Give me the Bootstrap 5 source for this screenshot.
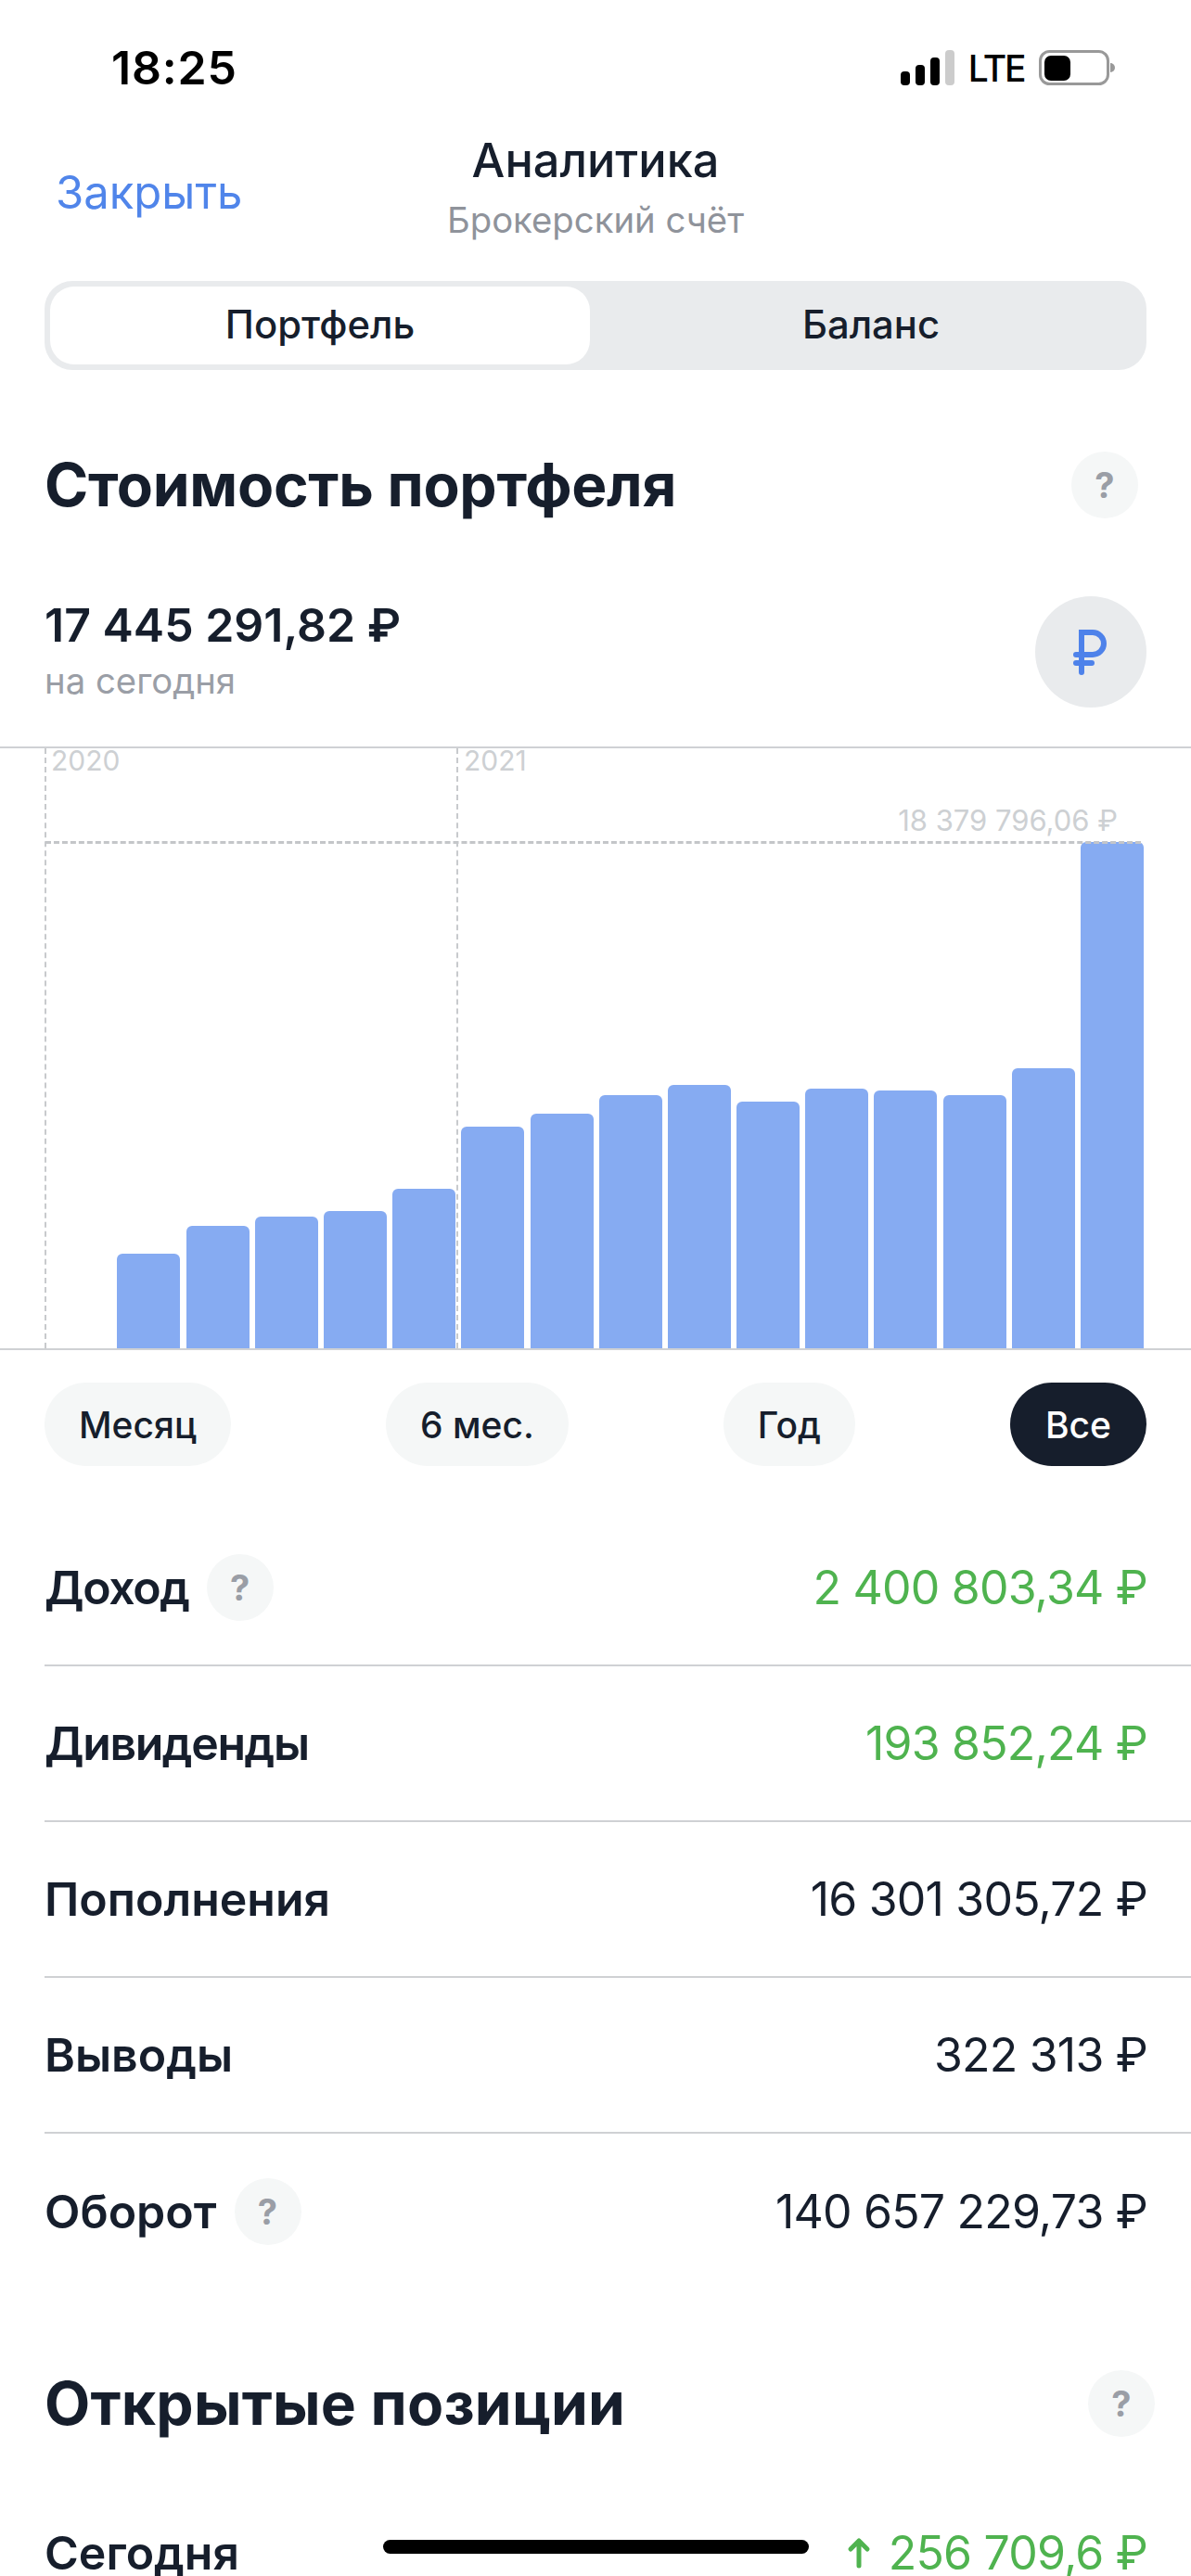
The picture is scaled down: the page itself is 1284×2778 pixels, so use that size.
<!DOCTYPE html>
<html lang="ru">
<head>
<meta charset="utf-8">
<title>Аналитика</title>
<link href="https://cdn.jsdelivr.net/npm/bootstrap@5.3.0/dist/css/bootstrap.min.css" rel="stylesheet">
<style>
html,body{margin:0;background:#fff;}
body{font-family:Inter,"Liberation Sans",sans-serif;color:#161e2c;width:1284px;height:2778px;overflow:hidden;position:relative;}
.st-bar{height:142px;padding:4px 82px 0 120px;}
.st-time{font-size:50px;font-weight:600;color:#000;line-height:1;letter-spacing:.8px;}
.st-lte{font-size:39px;font-weight:500;color:#000;line-height:1;letter-spacing:-2.4px;margin:0 16px 0 15px;}
.st-sig{width:58px;height:38px;}
.st-bat{width:82px;height:38px;}
.hdr{height:161px;position:relative;}
.hdr-close{font-size:49px;color:#5085ea;line-height:56px;position:absolute;left:60px;top:38px;text-decoration:none;}
.hdr-title{font-size:50.5px;font-weight:500;line-height:62px;text-align:center;}
.hdr-sub{font-size:38.3px;color:#8f939b;line-height:50px;text-align:center;margin-top:8px;}
.seg{margin:0 48px;height:96px;background:#e9ebed;border-radius:30px;padding:6px;}
.seg-on,.seg-off{font-size:41.8px;font-weight:500;color:#161e2c;border:0;border-radius:26px;line-height:1;padding:0;height:84px;}
.seg-on{background:#fff;width:582px;}
.seg-off{background:transparent;flex:1;padding-left:12px;}
.sec-head{padding-left:48px;height:72px;}
.sec-title{font-size:64px;font-weight:700;line-height:72px;letter-spacing:-.3px;margin:0;}
.sec-a{margin-top:88px;padding-right:57px;}
.sec-b{margin-top:87px;padding-right:39px;}
.sec-b .sec-title{letter-spacing:.2px;}
.qm{width:72px;height:72px;background:#f5f7f7;color:#9a9ea6;border-radius:50%;font-size:38px;font-weight:700;line-height:1;flex:none;}
.total{margin-top:84px;padding:0 48px;height:120px;}
.total-v{font-size:50px;font-weight:600;line-height:60px;margin-top:-5px;}
.total-s{font-size:38.3px;color:#9a9ea6;line-height:46px;margin-top:7px;}
.rub-c{width:120px;height:120px;border-radius:50%;background:#e9ebed;}
.chart{margin-top:42px;height:651px;border-top:2px solid #cfd1d4;border-bottom:2px solid #cfd1d4;position:relative;padding-right:51px;gap:6.2px;}
.bar{width:68px;background:#86abf2;border-radius:6px 6px 0 0;flex:none;}
.v-line{position:absolute;top:0;bottom:0;width:0;border-left:2px dashed #c8cacd;}
.v-a{left:48px;}
.v-b{left:492px;}
.h-line{position:absolute;left:49px;right:54px;top:100px;border-top:3px dashed #c4c6c9;}
.c-lbl{position:absolute;font-size:30px;color:#cdd0d3;line-height:32px;}
.l-a{left:55px;top:-3px;}
.l-b{left:500px;top:-3px;}
.l-c{right:79px;top:62px;font-size:31px;}
.pills{margin-top:35px;padding:0 48px;}
.pl{height:90px;border:0;border-radius:45px;background:#f5f7f7;color:#161e2c;font-size:39px;font-weight:500;padding:0 37px;line-height:1;}
.pl-on{background:#161e2c;color:#fff;padding:0 38px;}
.rows{margin:48px 0 0 48px;border-radius:0;}
.rows .list-group-item{height:168px;padding:0 47px 0 0;border-color:#cfd1d4;border-width:0 0 2px;background:transparent;color:#161e2c;}
.rows .list-group-item:last-child{border-bottom:0;}
.rows2{margin-top:41px;}
.r-l{font-size:50px;font-weight:600;line-height:60px;}
.r-tight{letter-spacing:-1.4px;}
.r-with-q{gap:19px;}
.r-v{font-size:50px;font-weight:400;line-height:60px;letter-spacing:-.8px;}
.up{color:#4fb34f;}
.arrow{width:28px;height:34px;margin-right:18px;}
.home{position:absolute;left:413px;top:2739px;width:459px;height:15px;background:#000;border-radius:8px;}
</style>
</head>
<body>
<div class="st-bar d-flex justify-content-between align-items-center">
  <div class="st-time">18:25</div>
  <div class="d-flex align-items-center">
    <svg class="st-sig" viewBox="0 0 58 38"><rect x="0" y="23" width="10" height="15" rx="4" fill="#000"/><rect x="16" y="16" width="10" height="22" rx="4" fill="#000"/><rect x="32" y="8" width="10" height="30" rx="4" fill="#000"/><rect x="48" y="0" width="10" height="38" rx="4" fill="#ccc"/></svg>
    <span class="st-lte">LTE</span>
    <svg class="st-bat" viewBox="0 0 82 38"><rect x="1.5" y="1.5" width="73" height="35" rx="10" fill="none" stroke="#999" stroke-width="3"/><rect x="6" y="6" width="28" height="27" rx="7" fill="#000"/><path d="M77 14a5 5 0 0 1 0 10z" fill="#999"/></svg>
  </div>
</div>
<div class="hdr">
  <a class="hdr-close" href="#">Закрыть</a>
  <div class="hdr-title">Аналитика</div>
  <div class="hdr-sub">Брокерский счёт</div>
</div>
<div class="seg d-flex">
  <button class="btn seg-on" type="button">Портфель</button>
  <button class="btn seg-off" type="button">Баланс</button>
</div>
<div class="sec-head sec-a d-flex justify-content-between align-items-center">
  <h2 class="sec-title">Стоимость портфеля</h2>
  <span class="qm d-flex align-items-center justify-content-center">?</span>
</div>
<div class="total d-flex justify-content-between align-items-center">
  <div>
    <div class="total-v">17 445 291,82 ₽</div>
    <div class="total-s">на сегодня</div>
  </div>
  <div class="rub-c d-flex align-items-center justify-content-center">
    <svg width="38" height="50" viewBox="0 0 38 50" fill="none" stroke="#4e82ea" stroke-width="6" stroke-linecap="round"><path d="M9 47V4H21a12 12 0 0 1 0 24H3"/><path d="M3 37H20"/></svg>
  </div>
</div>
<div class="chart d-flex justify-content-end align-items-end">
  <div class="bar" style="height:102px"></div>
  <div class="bar" style="height:132px"></div>
  <div class="bar" style="height:142px"></div>
  <div class="bar" style="height:148px"></div>
  <div class="bar" style="height:172px"></div>
  <div class="bar" style="height:239px"></div>
  <div class="bar" style="height:253px"></div>
  <div class="bar" style="height:273px"></div>
  <div class="bar" style="height:284px"></div>
  <div class="bar" style="height:266px"></div>
  <div class="bar" style="height:280px"></div>
  <div class="bar" style="height:278px"></div>
  <div class="bar" style="height:273px"></div>
  <div class="bar" style="height:302px"></div>
  <div class="bar" style="height:546px"></div>
  <span class="v-line v-a"></span>
  <span class="v-line v-b"></span>
  <span class="h-line"></span>
  <span class="c-lbl l-a">2020</span>
  <span class="c-lbl l-b">2021</span>
  <span class="c-lbl l-c">18 379 796,06 ₽</span>
</div>
<div class="pills d-flex justify-content-between">
  <button class="btn pl" type="button">Месяц</button>
  <button class="btn pl" type="button">6 мес.</button>
  <button class="btn pl" type="button">Год</button>
  <button class="btn pl pl-on" type="button">Все</button>
</div>
<div class="list-group list-group-flush rows">
  <div class="list-group-item d-flex justify-content-between align-items-center">
    <div class="d-flex align-items-center r-with-q"><span class="r-l r-tight">Доход</span><span class="qm d-flex align-items-center justify-content-center">?</span></div>
    <span class="r-v up">2 400 803,34 ₽</span>
  </div>
  <div class="list-group-item d-flex justify-content-between align-items-center">
    <span class="r-l r-tight">Дивиденды</span><span class="r-v up">193 852,24 ₽</span>
  </div>
  <div class="list-group-item d-flex justify-content-between align-items-center">
    <span class="r-l">Пополнения</span><span class="r-v">16 301 305,72 ₽</span>
  </div>
  <div class="list-group-item d-flex justify-content-between align-items-center">
    <span class="r-l">Выводы</span><span class="r-v">322 313 ₽</span>
  </div>
  <div class="list-group-item d-flex justify-content-between align-items-center">
    <div class="d-flex align-items-center r-with-q"><span class="r-l">Оборот</span><span class="qm d-flex align-items-center justify-content-center">?</span></div>
    <span class="r-v">140 657 229,73 ₽</span>
  </div>
</div>
<div class="sec-head sec-b d-flex justify-content-between align-items-center">
  <h2 class="sec-title">Открытые позиции</h2>
  <span class="qm d-flex align-items-center justify-content-center">?</span>
</div>
<div class="list-group list-group-flush rows rows2">
  <div class="list-group-item d-flex justify-content-between align-items-center">
    <span class="r-l">Сегодня</span>
    <span class="r-v up d-flex align-items-center"><svg class="arrow" viewBox="0 0 28 34" fill="none" stroke="#4fb34f" stroke-width="5" stroke-linecap="round" stroke-linejoin="round"><path d="M14 31V4M5 13l9-9 9 9"/></svg>256 709,6 ₽</span>
  </div>
</div>
<div class="home"></div>
<script src="https://cdn.jsdelivr.net/npm/bootstrap@5.3.0/dist/js/bootstrap.bundle.min.js"></script>
</body>
</html>
